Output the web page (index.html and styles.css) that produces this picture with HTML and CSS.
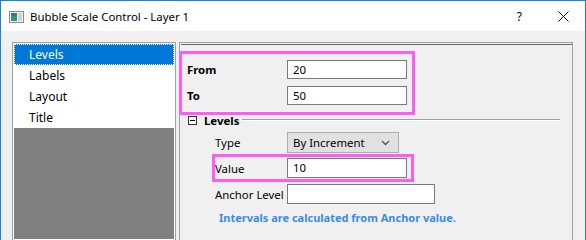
FILE: index.html
```html
<!DOCTYPE html>
<html>
  <head>
    <title>Bubble Scale Control - Layer 1</title>
    <meta charset='utf-8'>
    <link rel="stylesheet" href="styles.css">
  </head>
  <body>
    <div class="window">
      <div class="titlebar">
        <svg class="app-icon" width="15" height="12" viewBox="0 0 15 12">
          <rect x="0.5" y="0.5" width="14" height="11" fill="#f4f4f4" stroke="#8c8c8c"/>
          <rect x="2" y="2" width="6" height="8" fill="#3f8f7a"/>
          <rect x="2" y="2" width="6" height="3" fill="#3a6fb0"/>
          <rect x="9" y="2" width="4" height="8" fill="#c9d6d2"/>
        </svg>
        <span class="title">Bubble Scale Control - Layer 1</span>
        <span class="help">?</span>
        <svg class="close" width="11" height="11" viewBox="0 0 11 11">
          <path d="M0.5 0.5 L10.5 10.5 M10.5 0.5 L0.5 10.5" stroke="#111" stroke-width="1"/>
        </svg>
      </div>

      <div class="client">
        <ul class="nav">
          <li class="selected">Levels</li>
          <li>Labels</li>
          <li>Layout</li>
          <li>Title</li>
          <li class="empty"></li>
        </ul>

        <div class="panel">
          <div class="panel-inner">
            <div class="row row-from">
              <label class="bold">From</label>
              <div class="edit">20</div>
            </div>
            <div class="row row-to">
              <label class="bold">To</label>
              <div class="edit">50</div>
            </div>

            <div class="group-head">
              <span class="collapse"></span>
              <span class="bold">Levels</span>
              <span class="etched"></span>
            </div>

            <div class="row sub row-type">
              <label>Type</label>
              <div class="combo">
                <span>By Increment</span>
                <svg width="9" height="6" viewBox="0 0 9 6">
                  <polyline points="1,1 4.5,4.5 8,1" fill="none" stroke="#555" stroke-width="1.3"/>
                </svg>
              </div>
            </div>
            <div class="row sub row-value">
              <label>Value</label>
              <div class="edit">10</div>
            </div>
            <div class="row sub row-anchor">
              <label>Anchor Level</label>
              <div class="edit wide"></div>
            </div>
            <p class="note">Intervals are calculated from Anchor value.</p>
          </div>

          <!-- annotation boxes drawn over the dialog -->
          <div class="mark mark-range"></div>
          <div class="mark mark-value"></div>
        </div>
      </div>
    </div>
  </body>
</html>
```

FILE: styles.css
```css
      html, body {
        margin: 0;
        padding: 0;
      }
      body {
        width: 586px;
        height: 240px;
        overflow: hidden;
        font-family: 'Segoe UI', 'Noto Sans', sans-serif;
        font-size: 11.4px;
        color: #000;
      }

      .window {
        box-sizing: border-box;
        height: 240px;
        border: 1px solid #1883d7;
        border-bottom: none;
        display: flex;
        flex-direction: column;
      }

      /* Title bar */
      .titlebar {
        height: 30px;
        background: #fff;
        display: flex;
        align-items: center;
        flex-shrink: 0;
      }
      .titlebar .app-icon {
        margin-left: 8px;
        margin-top: 2px;
      }
      .titlebar .title {
        margin-left: 6px;
        flex: 1;
        font-size: 11.4px;
      }
      .titlebar .help {
        margin-right: 36px;
        font-size: 12px;
      }
      .titlebar .close {
        margin-right: 16px;
      }

      /* Client area */
      .client {
        flex: 1;
        background: #f0f0f0;
        padding: 11px 0 0 11px;
        display: flex;
        gap: 3px;
        min-height: 0;
      }

      .nav {
        list-style: none;
        margin: 0;
        padding: 1px;
        width: 160px;
        border: 1px solid #a0a0a0;
        border-bottom: none;
        background: #fff;
        display: flex;
        flex-direction: column;
      }
      .nav li {
        height: 21px;
        line-height: 21px;
        padding-left: 15px;
        box-sizing: border-box;
        flex-shrink: 0;
        font-size: 12px;
      }
      .nav li.selected {
        background: #0078d7;
        color: #fff;
        border: 1px dotted #fff;
        line-height: 19px;
        padding-left: 14px;
      }
      .nav li.empty {
        flex: 1;
        background: #808080;
      }

      .panel {
        position: relative;
        width: 392px;
        border: 1px solid #a0a0a0;
        border-bottom: none;
      }
      .panel-inner {
        margin: 1px 0 0 1px;
        border-top: 1px solid #696969;
        padding: 15px 0 0 6px;
      }

      .row {
        display: flex;
        align-items: center;
      }
      .row label {
        box-sizing: border-box;
        width: 100px;
        white-space: nowrap;
      }
      .row.sub label {
        padding-left: 28px;
      }
      .bold {
        font-weight: bold;
      }
      .row-to { margin-top: 7px; }
      .row-type { margin-top: 5px; }
      .row-value { margin-top: 5px; }
      .row-anchor { margin-top: 6px; }

      .edit {
        box-sizing: border-box;
        width: 120px;
        height: 19px;
        border: 1px solid #7a7a7a;
        background: #fff;
        padding-left: 5px;
        line-height: 17px;
      }
      .row-value .edit, .row-anchor .edit {
        height: 20px;
        line-height: 18px;
      }
      .edit.wide {
        width: 148px;
      }

      .combo {
        box-sizing: border-box;
        width: 112px;
        height: 21px;
        border: 1px solid #adadad;
        background: #e1e1e1;
        padding: 0 8px 0 5px;
        display: flex;
        align-items: center;
        justify-content: space-between;
      }

      .group-head {
        margin-top: 8px;
        height: 14px;
        display: flex;
        align-items: center;
      }
      .collapse {
        position: relative;
        box-sizing: border-box;
        width: 9px;
        height: 9px;
        border: 1px solid #333;
        background: #fff;
        margin: 1px 7px 0 1px;
      }
      .collapse::after {
        content: '';
        position: absolute;
        left: 1px;
        top: 3px;
        width: 5px;
        height: 1px;
        background: #000;
      }
      .etched {
        flex: 1;
        height: 0;
        margin: 0 12px 0 3px;
        border-top: 1px solid #a0a0a0;
        border-bottom: 1px solid #fff;
      }

      .note {
        margin: 6px 0 0 32px;
        line-height: 16px;
        font-size: 11px;
        color: #3b8bea;
        font-weight: bold;
      }

      /* Highlight annotations */
      .mark {
        position: absolute;
        box-sizing: border-box;
        border: 3px solid #ff5cf5;
      }
      .mark-range {
        left: -1px;
        top: 8px;
        width: 236px;
        height: 64px;
      }
      .mark-value {
        left: 32px;
        top: 111px;
        width: 202px;
        height: 28px;
      }
```
